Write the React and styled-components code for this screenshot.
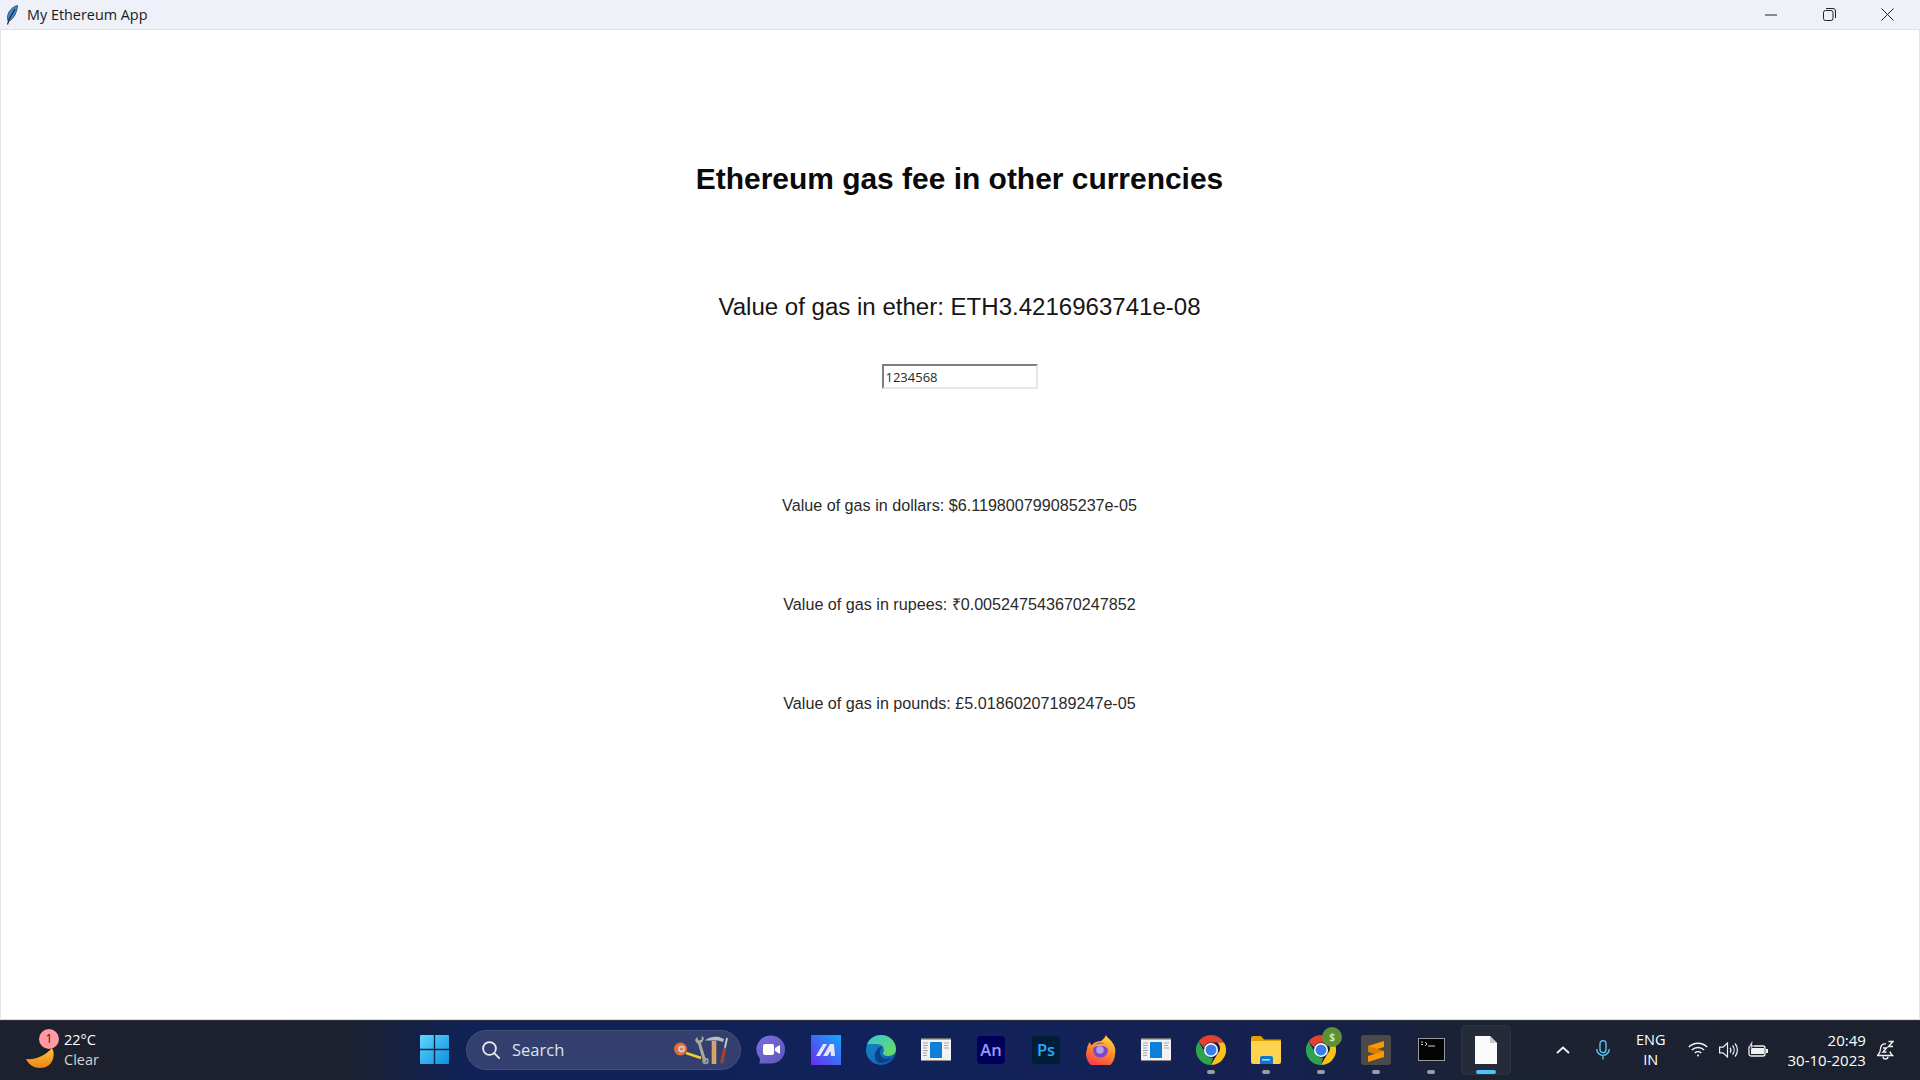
import React from "react";
import styled, { createGlobalStyle } from "styled-components";

const GlobalStyle = createGlobalStyle`
  html, body {
    margin: 0;
    padding: 0;
    height: 100%;
    overflow: hidden;
    background: #fff;
  }
`;

const Screen = styled.div`
  width: 1920px;
  height: 1080px;
  display: flex;
  flex-direction: column;
  font-family: "Liberation Sans", Arial, sans-serif;
`;

const TitleBar = styled.div`
  height: 29px;
  flex: none;
  display: flex;
  align-items: center;
  padding: 0 3px 0 6px;
  background: #eef1f8;
  border-bottom: 1px solid #e1e3e8;
`;

const AppTitle = styled.span`
  margin-left: 9px;
  font-family: "Open Sans", "Noto Sans", sans-serif;
  font-size: 14.4px;
  color: #1a1a1a;
`;

const WindowControls = styled.div`
  margin-left: auto;
  display: flex;
`;

const ControlButton = styled.div`
  width: 58.5px;
  height: 29px;
  display: flex;
  align-items: center;
  justify-content: center;
`;

const Content = styled.main`
  flex: 1;
  display: flex;
  flex-direction: column;
  align-items: center;
  background: #fff;
  border-left: 1px solid #e4e4e4;
  border-right: 1px solid #e4e4e4;
  padding-right: 1px;
  padding-top: 130px;
  border-bottom: 1px solid #d8d8d8;
`;

const Heading = styled.h1`
  margin: 0;
  height: 38px;
  line-height: 38px;
  font-size: 29.95px;
  font-weight: bold;
  color: #0a0a0a;
`;

const EtherValue = styled.div`
  margin-top: 94px;
  height: 30px;
  line-height: 30px;
  font-size: 24.05px;
  color: #161616;
`;

const GasInput = styled.input`
  margin-top: 42px;
  box-sizing: border-box;
  width: 156px;
  height: 25px;
  padding: 0 0 0 2px;
  border-style: solid;
  border-width: 2px;
  border-color: #7f7f7f #e6e6e6 #e6e6e6 #7f7f7f;
  outline: none;
  font-family: "Open Sans", "Noto Sans", sans-serif;
  font-size: 13px;
  color: #2a2a2a;
`;

const CurrencyRow = styled.div`
  height: 20px;
  line-height: 20px;
  margin-top: ${(p) => p.$gap}px;
  font-size: 16.15px;
  color: #2a2a2a;
`;

const Taskbar = styled.footer`
  height: 60px;
  flex: none;
  display: flex;
  align-items: center;
  padding-bottom: 2px;
  color: #fff;
  font-family: "Open Sans", "Noto Sans", sans-serif;
  background: linear-gradient(
    90deg,
    #1c212d 0,
    #1c212e 340px,
    #0f2157 470px,
    #12225a 1000px,
    #15214e 1300px,
    #1b2233 1480px,
    #1c212d 100%
  );
  border-top: 1px solid #30343c;
  box-sizing: border-box;
`;

const Weather = styled.div`
  width: 420px;
  flex: none;
  display: flex;
  align-items: center;
  padding-left: 26px;
  box-sizing: border-box;
`;

const WeatherIcon = styled.div`
  position: relative;
  width: 28px;
  height: 38px;
  flex: none;
`;

const Badge = styled.span`
  position: absolute;
  left: 13px;
  top: -2px;
  width: 20px;
  height: 20px;
  border-radius: 50%;
  background: #ff99a4;
  color: #1c1c1c;
  font-size: 12px;
  line-height: 20px;
  text-align: center;
`;

const StackText = styled.div`
  display: flex;
  flex-direction: column;
  font-size: ${(p) => p.$size || 14.5}px;
  line-height: 20px;
  text-align: ${(p) => p.$align || "left"};
  margin-left: ${(p) => p.$left || 0}px;
`;

const Dim = styled.span`
  color: #d2d4d8;
`;

const Center = styled.div`
  width: 1090px;
  flex: none;
  display: flex;
  align-items: center;
  gap: 25px;
`;

const StartButton = styled.div`
  width: 29px;
  height: 29px;
  flex: none;
  display: flex;
`;

const SearchPill = styled.div`
  width: 275px;
  height: 40px;
  flex: none;
  margin-left: -8px;
  margin-right: -10px;
  padding: 0 11px 0 15px;
  box-sizing: border-box;
  display: flex;
  align-items: center;
  border-radius: 20px;
  background: #33406f;
  border: 1px solid #474f78;
  color: #dfe2ea;
  font-size: 16.5px;
`;

const SearchLabel = styled.span`
  margin-left: 12px;
`;

const SearchArt = styled.div`
  margin-left: auto;
  display: flex;
`;

const AppSlot = styled.div`
  position: relative;
  width: 30px;
  height: 30px;
  flex: none;
  display: flex;
  align-items: center;
  justify-content: center;
  ${(p) => p.$active && `
    &::before {
      content: "";
      position: absolute;
      left: -10px;
      top: -10px;
      width: 50px;
      height: 50px;
      box-sizing: border-box;
      border-radius: 5px;
      background: #262b39;
      border: 1px solid #2f3442;
    }
    & > svg { position: relative; }
  `}
`;

const RunDot = styled.span`
  position: absolute;
  left: 50%;
  bottom: -9px;
  height: 4px;
  border-radius: 2px;
  transform: translateX(-50%);
  width: ${(p) => (p.$active ? 20 : 8)}px;
  background: ${(p) => (p.$active ? "#4cc2ff" : "#9a9da5")};
`;

const Tray = styled.div`
  flex: 1;
  display: flex;
  align-items: center;
`;

const TrayIcon = styled.div`
  display: flex;
  flex: none;
  margin-left: ${(p) => p.$left}px;
`;

const Sym = styled.svg`
  display: block;
  flex: none;
`;

/* icons */
const Feather = () => (
  <Sym width="12" height="20" viewBox="0 0 12 20">
    <path d="M11.5 0.5C7 1.5 2 6 1.5 12c-.2 2 .3 3.5 1 4.5C8 14 11 7 11.5.5z" fill="#3f8ad6" stroke="#2c3a48" strokeWidth=".8" />
    <path d="M9 4 3 14.5 1.5 19.5" stroke="#1d2530" strokeWidth="1.2" fill="none" />
  </Sym>
);

const MinIcon = () => (
  <Sym width="12" height="2" viewBox="0 0 12 2"><path d="M0 1h12" stroke="#222" strokeWidth="1" /></Sym>
);
const RestoreIcon = () => (
  <Sym width="13" height="13" viewBox="0 0 13 13" fill="none" stroke="#222" strokeWidth="1">
    <rect x=".5" y="2.5" width="9.5" height="10" rx="2" />
    <path d="M3 .5h7a2.5 2.5 0 0 1 2.5 2.5v7" />
  </Sym>
);
const CloseIcon = () => (
  <Sym width="13" height="13" viewBox="0 0 13 13"><path d="M.5.5l12 12M12.5.5l-12 12" stroke="#222" strokeWidth="1" /></Sym>
);

const Moon = () => (
  <Sym width="28" height="38" viewBox="0 0 28 38">
    <defs>
      <linearGradient id="moon" x1="0" y1="0" x2="0" y2="1">
        <stop offset="0" stopColor="#ffc53d" />
        <stop offset="1" stopColor="#ee8412" />
      </linearGradient>
    </defs>
    <path d="M0 28c9 1 19-3 26-11 2 3 2 7 1 11-2 6-7 9-13 9-6 0-11-3-14-9z" fill="url(#moon)" />
  </Sym>
);

const WinLogo = () => (
  <Sym width="29" height="29" viewBox="0 0 29 29">
    <defs>
      <linearGradient id="win" x1="0" y1="0" x2="1" y2="1">
        <stop offset="0" stopColor="#5ed8ff" />
        <stop offset="1" stopColor="#0d8fe0" />
      </linearGradient>
    </defs>
    <path d="M1 0h12.8v13.8H0V1a1 1 0 0 1 1-1zM15.2 0H28a1 1 0 0 1 1 1v12.8H15.2zM0 15.2h13.8V29H1a1 1 0 0 1-1-1zM15.2 15.2H29V28a1 1 0 0 1-1 1H15.2z" fill="url(#win)" />
  </Sym>
);

const SearchGlass = () => (
  <Sym width="18" height="18" viewBox="0 0 18 18" fill="none" stroke="#e8eaf0" strokeWidth="1.8">
    <circle cx="7.5" cy="7.5" r="6.4" />
    <path d="M12.2 12.2l5 5" strokeLinecap="round" />
  </Sym>
);

const Tools = () => (
  <Sym width="55" height="30" viewBox="0 0 55 30">
    <circle cx="6.500" cy="14" r="6.500" fill="#e8693a" />
    <circle cx="7.500" cy="14" r="3.400" fill="#c9cdd3" />
    <circle cx="7.500" cy="14" r="1.400" fill="#e8693a" />
    <path d="M12 18l15 5" stroke="#f2cf2e" strokeWidth="2.600" />
    <path d="M25 7l6 20" stroke="#a6a8a4" strokeWidth="3" />
    <path d="M21 5l2-3 1.500 3.500 3-.8L28 .5l2 3-2 4-5 1z" fill="#a6a8a4" />
    <circle cx="31.500" cy="26" r="2.400" fill="none" stroke="#9da09c" strokeWidth="1.600" />
    <path d="M40 6v23" stroke="#d9a067" strokeWidth="4.600" />
    <path d="M31 5.500c3-3.500 10-4.500 14-3.500l5 2-1 3-5-1.500H36z" fill="#b9bcc0" />
    <path d="M53 3l-2.500 12" stroke="#c9ccd0" strokeWidth="1.800" />
    <path d="M50.500 14l-2.500 13" stroke="#a8402f" strokeWidth="3.200" strokeLinecap="round" />
  </Sym>
);

const MeetIcon = () => (
  <Sym width="30" height="30" viewBox="0 0 30 30">
    <defs>
      <linearGradient id="meet" x1="0" y1="0" x2="1" y2="1">
        <stop offset="0" stopColor="#7b6ee0" />
        <stop offset="1" stopColor="#5e55b8" />
      </linearGradient>
    </defs>
    <path d="M15 0.5a14 14 0 0 1 0 28H3c1-1.500 1.200-3 .8-5A14 14 0 0 1 15 .5z" fill="url(#meet)" />
    <rect x="7" y="9" width="11" height="11" rx="2" fill="#fff" />
    <path d="M19 13l5-3v9l-5-3z" fill="#fff" />
  </Sym>
);

const MaIcon = () => (
  <Sym width="30" height="30" viewBox="0 0 30 30">
    <defs>
      <linearGradient id="ma" x1="1" y1="0" x2="0" y2="1">
        <stop offset="0" stopColor="#14a8fb" />
        <stop offset="1" stopColor="#6a2bf0" />
      </linearGradient>
    </defs>
    <rect width="30" height="30" fill="url(#ma)" />
    <path d="M5 21l7-12h4l-7 12zM12 21l7-12h4l1 12h-4l-.5-5-3 5z" fill="#e6e4fb" />
  </Sym>
);

const EdgeIcon = () => (
  <Sym width="30" height="30" viewBox="0 0 30 30">
    <defs>
      <linearGradient id="edgeA" x1="0" y1="0" x2="1" y2="1">
        <stop offset="0" stopColor="#36c5d8" />
        <stop offset="1" stopColor="#6fdc5a" />
      </linearGradient>
      <linearGradient id="edgeB" x1="0" y1="0" x2="1" y2="1">
        <stop offset="0" stopColor="#1a8ad0" />
        <stop offset="1" stopColor="#0c5aa6" />
      </linearGradient>
    </defs>
    <circle cx="15" cy="15" r="15" fill="url(#edgeB)" />
    <path d="M1 9C4 3 9 0 15 0c8 0 15 6 15 14 0 4-3 7-8 7-3 0-5-1-5-3 0-1 1-1 1-3 0-3-3-6-7-6-4 0-8 0-11 0z" fill="url(#edgeA)" />
    <path d="M26 23c-3 3-7 5-11 5-4 0-6-3-6-7 0-5 3-9 8-10-2 2-3 4-3 7 0 5 5 7 12 5z" fill="#0b3f87" />
  </Sym>
);

const WindowAppIcon = () => (
  <Sym width="30" height="23" viewBox="0 0 30 23">
    <rect width="30" height="23" fill="#f2f2f2" />
    <rect width="30" height="1.500" fill="#6d6d6d" />
    <rect y="22" width="30" height="1" fill="#8a8a8a" />
    <rect x="9" y="4" width="12" height="16" rx=".5" fill="#0e7fd8" />
    <path d="M2 5h5M2 7.500h5M2 10h4M2 12.500h5M2 15h4M2 17.500h4M23 5h5M23 7.500h4M23 10h5" stroke="#a5a5a5" strokeWidth="1" />
  </Sym>
);

const AdobeIcon = ({ bg, fg, children }) => (
  <Sym width="28" height="28" viewBox="0 0 28 28">
    <rect width="28" height="28" rx="4" fill={bg} />
    <text x="14" y="20" textAnchor="middle" fontFamily="Open Sans, sans-serif" fontWeight="600" fontSize="16.5" fill={fg}>{children}</text>
  </Sym>
);

const FirefoxIcon = () => (
  <Sym width="30" height="30" viewBox="0 0 30 30">
    <defs>
      <linearGradient id="fx" x1=".7" y1="0" x2=".3" y2="1">
        <stop offset="0" stopColor="#ffd83a" />
        <stop offset=".45" stopColor="#ff8a30" />
        <stop offset="1" stopColor="#ee3350" />
      </linearGradient>
    </defs>
    <path d="M20 0c1 3 4 4 6 7 3 4 4 8 3 12a14.500 14.500 0 1 1-28-5c0-3 2-6 3-7 0 2 1 3 2 3 2-3 6-4 9-4 2-2 4-3 5-6z" fill="url(#fx)" />
    <circle cx="14.500" cy="15" r="7.500" fill="#7a48cf" />
    <circle cx="14" cy="15" r="3.800" fill="#b2a0ea" />
    <path d="M6 12c4-3 10-5 15-2 3 2 2 5 2 5-2-3-6-5-10-4z" fill="#ffa53a" />
  </Sym>
);

const ChromeIcon = () => (
  <Sym width="30" height="30" viewBox="0 0 30 30">
    <path d="M15 0a15 15 0 0 1 13 7.500H15a7.500 7.500 0 0 0-7 5L2.600 6.500A15 15 0 0 1 15 0z" fill="#e2412f" />
    <path d="M28 7.500A15 15 0 0 1 15 30l6.500-11.200a7.500 7.500 0 0 0 0-11.300z" fill="#fbc116" />
    <path d="M15 30A15 15 0 0 1 2.600 6.500l6.500 11.300a7.500 7.500 0 0 0 8 4.900z" fill="#2fa44f" />
    <circle cx="15" cy="15" r="7" fill="#fff" />
    <circle cx="15" cy="15" r="5.500" fill="#3b7de8" />
  </Sym>
);

const ChromeBadge = styled.span`
  position: absolute;
  right: -6px;
  top: -8px;
  width: 20px;
  height: 20px;
  border-radius: 50%;
  background: #5e9135;
  color: #cfe8a8;
  font-size: 10px;
  font-weight: 700;
  line-height: 20px;
  text-align: center;
`;

const FolderIcon = () => (
  <Sym width="30" height="28" viewBox="0 0 30 28">
    <path d="M0 2a2 2 0 0 1 2-2h8l3 3.500h17V8H0z" fill="#e0a000" />
    <path d="M0 5h30v21a2 2 0 0 1-2 2H2a2 2 0 0 1-2-2z" fill="#fdd34f" />
    <path d="M9 28v-6a2 2 0 0 1 2-2h9a2 2 0 0 1 2 2v6z" fill="#0f78c8" />
    <rect x="11" y="23" width="8" height="1.600" fill="#9fd4f5" />
  </Sym>
);

const SublimeIcon = () => (
  <Sym width="30" height="30" viewBox="0 0 30 30">
    <rect width="30" height="30" rx="3" fill="#4a4a4a" />
    <path d="M23 6v6L7 17v-6z" fill="#ff9800" />
    <path d="M7 11l16 5v6L7 17z" fill="#d97f00" />
    <path d="M23 16v6L7 27v-6z" fill="#ff9800" />
  </Sym>
);

const CmdIcon = () => (
  <Sym width="27" height="23" viewBox="0 0 27 23">
    <rect width="27" height="23" fill="#9a9a9a" />
    <rect x="1" y="1" width="25" height="21" fill="#040404" />
    <path d="M3 4h2M3 6.500h2M7 4l2 2-2 2M10 8h7" stroke="#cfcfcf" strokeWidth="1" fill="none" />
  </Sym>
);

const DocIcon = () => (
  <Sym width="22" height="28" viewBox="0 0 22 28">
    <path d="M0 0h15l7 7v21H0z" fill="#fbfbfb" />
    <path d="M15 0l7 7h-7z" fill="#c6c8cc" />
  </Sym>
);

const Chevron = () => (
  <Sym width="14" height="8" viewBox="0 0 14 8"><path d="M1 7l6-5.500L13 7" fill="none" stroke="#f2f2f2" strokeWidth="1.800" /></Sym>
);
const Mic = () => (
  <Sym width="14" height="20" viewBox="0 0 14 20" fill="none" stroke="#60cdff" strokeWidth="1.300">
    <rect x="4" y=".7" width="6" height="12" rx="3" />
    <path d="M.7 9a6.300 6.300 0 0 0 12.600 0M7 15.500V19.500" />
  </Sym>
);
const Wifi = () => (
  <Sym width="20" height="15" viewBox="0 0 20 15" fill="none" stroke="#f5f5f5" strokeWidth="1.400">
    <path d="M.8 5a13 13 0 0 1 18.400 0M3.800 8a9 9 0 0 1 12.400 0M6.800 11a4.600 4.600 0 0 1 6.400 0" />
    <circle cx="10" cy="13.500" r="1" fill="#f5f5f5" stroke="none" />
  </Sym>
);
const Speaker = () => (
  <Sym width="20" height="16" viewBox="0 0 20 16" fill="none" stroke="#f2f2f2" strokeWidth="1.200">
    <path d="M.6 5.200h3.400L8.500 1v14L4 10.800H.6z" />
    <path d="M11 5.500a4 4 0 0 1 0 5M13.500 3.500a7 7 0 0 1 0 9M16 1.500a10 10 0 0 1 0 13" />
  </Sym>
);
const Battery = () => (
  <Sym width="20" height="17" viewBox="0 0 20 17">
    <rect x="1" y="5" width="16" height="10" rx="2" fill="none" stroke="#f2f2f2" strokeWidth="1.300" />
    <path d="M3 7h13v6H3z" fill="#f2f2f2" />
    <rect x="18" y="8" width="2" height="4" fill="#f2f2f2" />
    <path d="M4 0L1 5h2L2 9l4-5H4l1-4z" fill="#f2f2f2" stroke="#1c212d" strokeWidth=".6" />
  </Sym>
);
const Bell = () => (
  <Sym width="17" height="20" viewBox="0 0 17 20" fill="none" stroke="#f2f2f2" strokeWidth="1.300">
    <path d="M9 4C5 3.500 3.500 6 3.500 9c0 3-1 4.500-3 6.500h15c-1.500-1.300-2.300-2.500-2.600-4" />
    <path d="M6 16.500a2.500 2.500 0 0 0 5 0" />
    <path d="M6 8h3.500L6 12h3.500M11.500 1.500h4.500l-4.500 5H16" strokeWidth="1.400" />
  </Sym>
);

const apps = [
  { key: "meet", icon: <MeetIcon /> },
  { key: "ma", icon: <MaIcon /> },
  { key: "edge", icon: <EdgeIcon /> },
  { key: "win1", icon: <WindowAppIcon /> },
  { key: "an", icon: <AdobeIcon bg="#00005b" fg="#9999ff">An</AdobeIcon> },
  { key: "ps", icon: <AdobeIcon bg="#001e36" fg="#31a8ff">Ps</AdobeIcon> },
  { key: "firefox", icon: <FirefoxIcon /> },
  { key: "win2", icon: <WindowAppIcon /> },
  { key: "chrome", icon: <ChromeIcon />, running: true },
  { key: "folder", icon: <FolderIcon />, running: true },
  { key: "chrome2", icon: <ChromeIcon />, running: true, badge: true },
  { key: "sublime", icon: <SublimeIcon />, running: true },
  { key: "cmd", icon: <CmdIcon />, running: true },
  { key: "doc", icon: <DocIcon />, running: true, active: true },
];

const rows = [
  { gap: 106, text: "Value of gas in dollars: $6.119800799085237e-05" },
  { gap: 79, text: "Value of gas in rupees: ₹0.005247543670247852" },
  { gap: 79, text: "Value of gas in pounds: £5.01860207189247e-05" },
];

export default function App() {
  return (
    <Screen>
      <GlobalStyle />
      <TitleBar>
        <Feather />
        <AppTitle>My Ethereum App</AppTitle>
        <WindowControls>
          <ControlButton><MinIcon /></ControlButton>
          <ControlButton><RestoreIcon /></ControlButton>
          <ControlButton><CloseIcon /></ControlButton>
        </WindowControls>
      </TitleBar>

      <Content>
        <Heading>Ethereum gas fee in other currencies</Heading>
        <EtherValue>Value of gas in ether: ETH3.4216963741e-08</EtherValue>
        <GasInput defaultValue="1234568" />
        {rows.map((row) => (
          <CurrencyRow key={row.text} $gap={row.gap}>{row.text}</CurrencyRow>
        ))}
      </Content>

      <Taskbar>
        <Weather>
          <WeatherIcon>
            <Moon />
            <Badge>1</Badge>
          </WeatherIcon>
          <StackText $left={10}>
            <span>22°C</span>
            <Dim>Clear</Dim>
          </StackText>
        </Weather>
        <Center>
          <StartButton><WinLogo /></StartButton>
          <SearchPill>
            <SearchGlass />
            <SearchLabel>Search</SearchLabel>
            <SearchArt><Tools /></SearchArt>
          </SearchPill>
          {apps.map((app) => (
            <AppSlot key={app.key} $active={app.active}>
              {app.icon}
              {app.badge && <ChromeBadge>$</ChromeBadge>}
              {app.running && <RunDot $active={app.active} />}
            </AppSlot>
          ))}
        </Center>
        <Tray>
          <TrayIcon $left={46}><Chevron /></TrayIcon>
          <TrayIcon $left={26}><Mic /></TrayIcon>
          <StackText $align="center" $left={26}>
            <span>ENG</span>
            <span>IN</span>
          </StackText>
          <TrayIcon $left={22}><Wifi /></TrayIcon>
          <TrayIcon $left={11}><Speaker /></TrayIcon>
          <TrayIcon $left={9}><Battery /></TrayIcon>
          <StackText $align="right" $left={20} $size={15}>
            <span>20:49</span>
            <span>30-10-2023</span>
          </StackText>
          <TrayIcon $left={11}><Bell /></TrayIcon>
        </Tray>
      </Taskbar>
    </Screen>
  );
}
